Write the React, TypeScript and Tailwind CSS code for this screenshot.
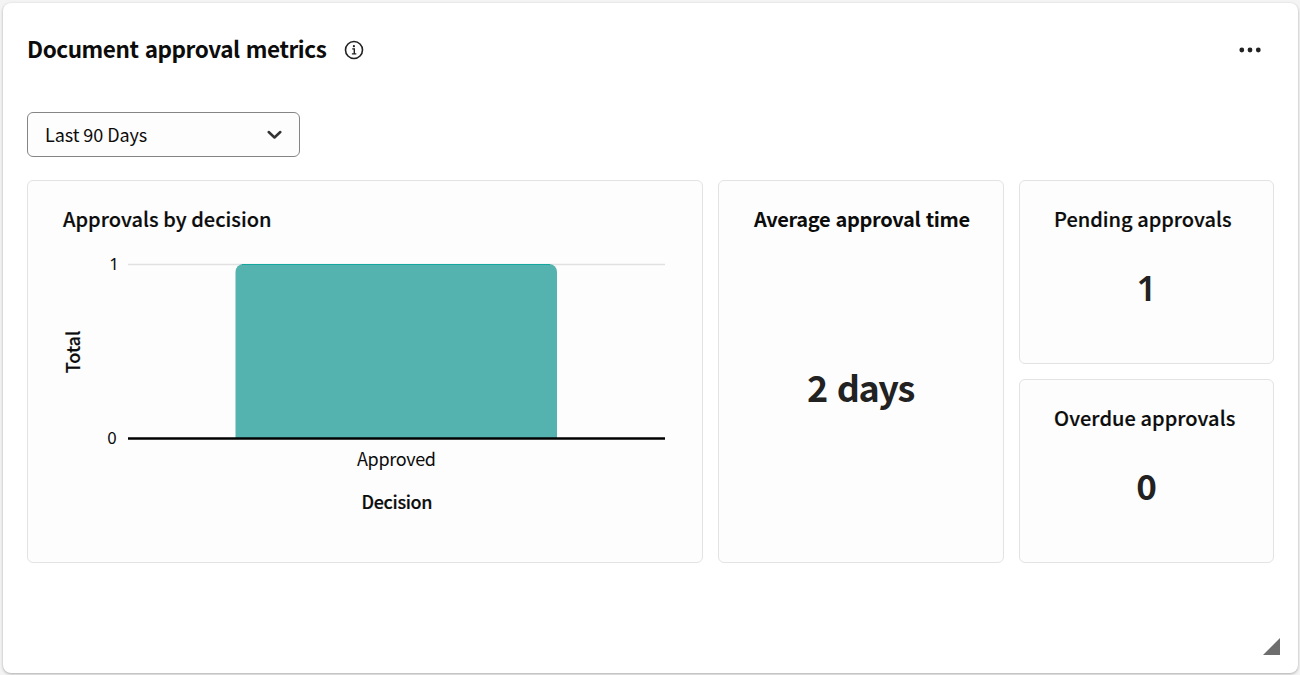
import type { ReactNode } from "react";

function Panel({ title, className, titleClass, children }: { title: string; className: string; titleClass: string; children: ReactNode }) {
  return (
    <section className={`flex flex-col rounded-[6px] border border-[#e3e3e3] bg-[#fdfdfd] ${className}`}>
      <h2 className={`h-8 text-[20px] leading-8 whitespace-nowrap text-[#0c0c0c] ${titleClass}`}>{title}</h2>
      {children}
    </section>
  );
}

function DecisionChart() {
  return (
    <svg width="640" height="290" viewBox="0 0 640 290" className="-ml-[16px] mt-[10px] block" fill="#0c0c0c" fontSize="17">
      <path d="M81 19.500H618" stroke="#e1e1e1" strokeWidth="1.500" />
      <path d="M188.500 193V27a8 8 0 0 1 8-8H502a8 8 0 0 1 8 8V193Z" fill="#54b2af" />
      <path d="M195 19.500H503" stroke="#16a6a0" />
      <path d="M81 193.500H618" stroke="#000" strokeWidth="2.500" />
      <text x="67" y="25" textAnchor="middle" className="font-['Noto_Sans',sans-serif]">1</text>
      <text x="65" y="199" textAnchor="middle">0</text>
      <text x="349.500" y="221" textAnchor="middle" fontSize="18" textLength="79">Approved</text>
      <text x="350" y="264" textAnchor="middle" fontSize="18" fontWeight="500" stroke="#0c0c0c" strokeWidth="0.200" textLength="71">Decision</text>
      <text transform="translate(33 107) rotate(-90)" textAnchor="middle" fontSize="18" fontWeight="500" stroke="#0c0c0c" strokeWidth="0.200">Total</text>
    </svg>
  );
}

export default function App() {
  return (
    <div className="h-[675px] w-[1300px] overflow-hidden bg-[#f4f4f4] pt-[3px] pl-[3px] font-['Noto_Sans_CJK_SC','Noto_Sans',sans-serif]">
      <main className="flex h-[670px] w-[1295px] flex-col rounded-[8px] bg-white pl-6 shadow-[0_1px_3px_rgba(0,0,0,0.3)]">
        <header className="mt-[31px] flex h-8 items-center">
          <h1 className="-mt-[4px] w-[299px] text-[22.500px] leading-8 font-bold tracking-[-0.440px] [word-spacing:1.500px] whitespace-nowrap text-[#0c0c0c]">Document approval metrics</h1>
          <svg className="ml-[18px]" width="20" height="20" viewBox="0 0 20 20" fill="none" stroke="#222" strokeWidth="1.600">
            <circle cx="10" cy="10" r="8.500" />
            <path d="M8.200 8.900H10.300V13.900M7.900 13.900H12.300" strokeWidth="1.400" />
            <circle cx="9.900" cy="6.200" r="1.100" fill="#222" stroke="none" />
          </svg>
          <svg className="mr-[37px] ml-auto" width="22" height="6" viewBox="0 0 22 6" fill="#222">
            <circle cx="2.800" cy="3" r="2.400" />
            <circle cx="11" cy="3" r="2.400" />
            <circle cx="19.300" cy="3" r="2.400" />
          </svg>
        </header>
        <button className="mt-[46px] flex h-[45px] w-[273px] shrink-0 items-center justify-between rounded-[6px] border border-[#858585] bg-[#fdfdfd] pr-[17px] pl-[17px] text-[18px] text-[#0c0c0c]">
          <span className="-mt-px tracking-[-0.080px] whitespace-nowrap">Last 90 Days</span>
          <svg width="15" height="10" viewBox="0 0 15 10" fill="none" stroke="#333" strokeWidth="2.500" strokeLinecap="round" strokeLinejoin="round">
            <path d="M1.700 2L7.500 7.500L13.300 2" />
          </svg>
        </button>
        <div className="mt-[23px] flex gap-[15px]">
          <Panel title="Approvals by decision" className="h-[383px] w-[676px] pt-[22px] pl-[35px]" titleClass="font-medium tracking-[0.040px] [-webkit-text-stroke:0.200px]">
            <DecisionChart />
          </Panel>
          <Panel title="Average approval time" className="h-[383px] w-[286px] pt-[22px] pl-[35px]" titleClass="font-bold tracking-[-0.330px] [word-spacing:1px]">
            <p className="mt-[123px] -ml-[36px] text-center text-[36px] leading-[56px] font-bold tracking-[-1.400px] [word-spacing:3px] text-[#222]">2 days</p>
          </Panel>
          <div className="flex flex-col gap-[15px]">
            <Panel title="Pending approvals" className="h-[184px] w-[255px] pt-[22px] pl-[34px]" titleClass="font-medium [-webkit-text-stroke:0.200px]">
              <p className="mt-[25px] -ml-[34px] text-center font-['Noto_Sans',sans-serif] text-[35px] leading-[56px] font-semibold text-[#222]">1</p>
            </Panel>
            <Panel title="Overdue approvals" className="h-[184px] w-[255px] pt-[22px] pl-[34px]" titleClass="font-medium tracking-[0.060px] [-webkit-text-stroke:0.200px]">
              <p className="mt-[23px] -ml-[34px] text-center text-[35px] leading-[56px] font-bold text-[#222]">0</p>
            </Panel>
          </div>
        </div>
        <svg className="mt-auto mr-[18px] mb-[18px] ml-auto" width="17" height="17" viewBox="0 0 17 17">
          <path d="M17 0V17H0Z" fill="#6e6e6e" />
        </svg>
      </main>
    </div>
  );
}
